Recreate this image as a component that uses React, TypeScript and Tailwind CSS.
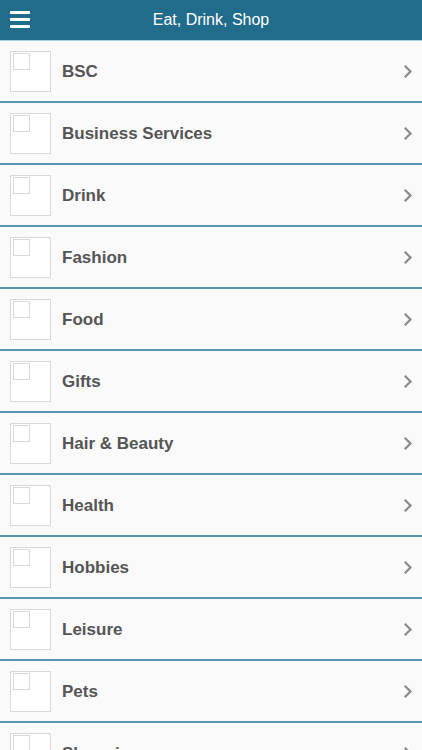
import React from 'react';

const CATEGORIES = [
  'BSC',
  'Business Services',
  'Drink',
  'Fashion',
  'Food',
  'Gifts',
  'Hair & Beauty',
  'Health',
  'Hobbies',
  'Leisure',
  'Pets',
  'Shopping',
];

const Thumb: React.FC = () => (
  <div className="relative w-[41px] h-[41px] border border-[#d9d9d9] bg-white shrink-0">
    <div className="absolute left-[2px] top-[1px] w-[17px] h-[17px] border border-[#d9d9d9]" />
  </div>
);

const App: React.FC = () => {
  return (
    <div className="w-[422px] h-[750px] overflow-hidden bg-[#fafafa]" style={{ fontFamily: '"Liberation Sans", Arial, sans-serif' }}>
      {/* Top bar */}
      <div className="relative h-[41px] bg-[#226c8b] flex items-center justify-center border-b border-[#a8d2e2]">
        <button className="absolute left-[10px] top-[11px] flex flex-col gap-[4px]">
          <span className="block w-[20px] h-[3px] bg-white rounded-[1px]" />
          <span className="block w-[20px] h-[3px] bg-white rounded-[1px]" />
          <span className="block w-[20px] h-[3px] bg-white rounded-[1px]" />
        </button>
        <h1 className="text-white text-[16px] leading-none">Eat, Drink, Shop</h1>
      </div>

      {/* Category list */}
      <ul>
        {CATEGORIES.map(name => (
          <li key={name} className="h-[62px] flex items-center pl-[10px] pr-[9px] pt-[1px] border-b-2 border-[#5a94ad]">
            <Thumb />
            <span className="ml-[11px] flex-1 text-[17px] font-bold text-[#555555]">{name}</span>
            <svg className="w-[9px] h-[13px] text-[#8a8a8a]" viewBox="0 0 9 13" fill="none" stroke="currentColor">
              <path d="M1.5 1.5l5 5-5 5" strokeWidth={2.2} strokeLinecap="square" />
            </svg>
          </li>
        ))}
      </ul>
    </div>
  );
};

export default App;
